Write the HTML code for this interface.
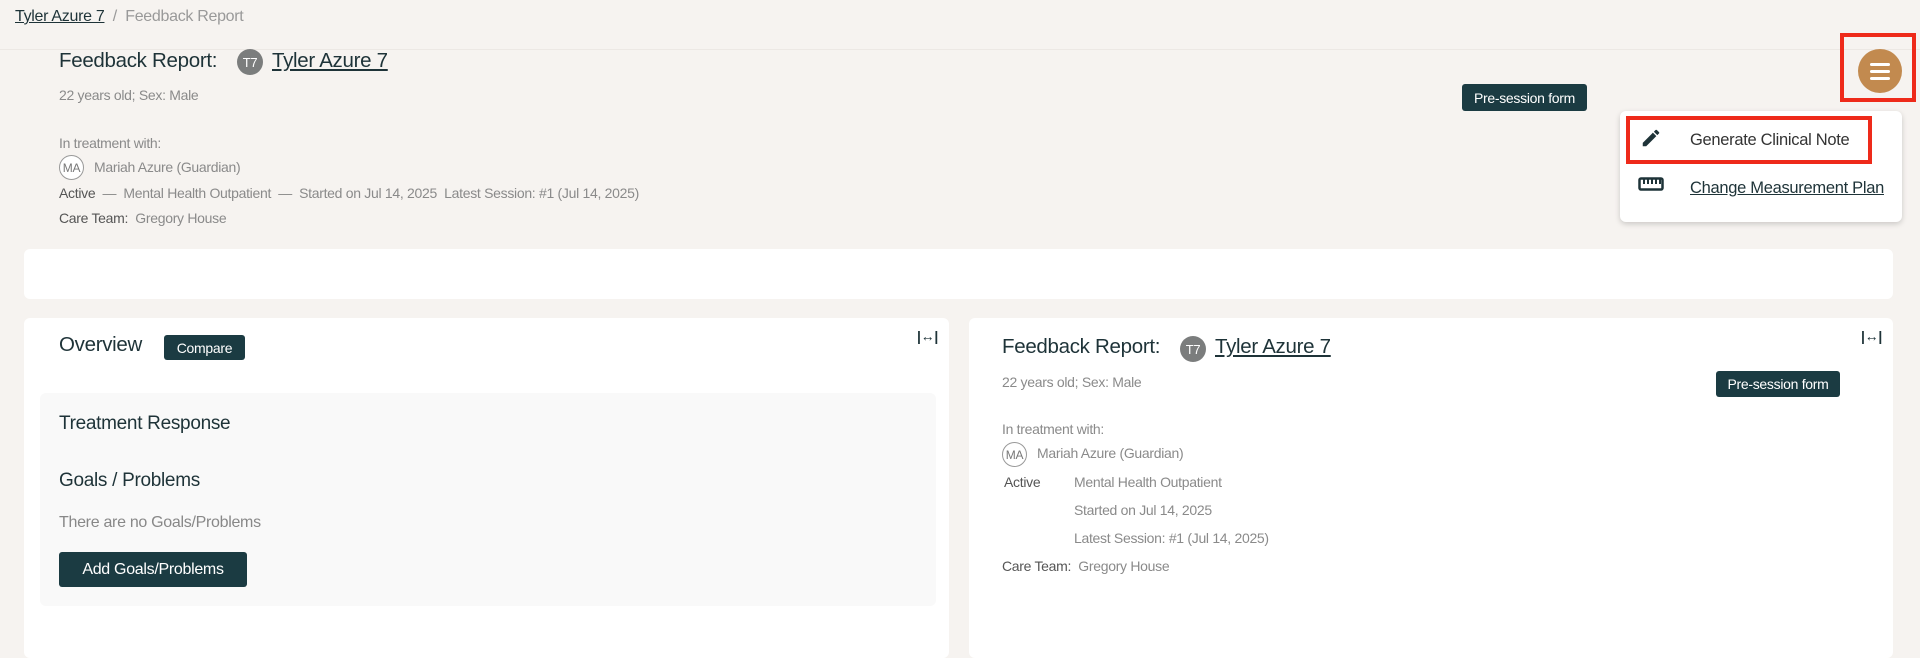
<!DOCTYPE html>
<html><head><meta charset="utf-8"><style>
*{box-sizing:border-box;margin:0;padding:0}
body{width:1920px;height:648px;overflow:hidden;background:#f6f3f0;font-family:"Liberation Sans",sans-serif;color:#1e3338;position:relative;letter-spacing:-0.3px}
.a{position:absolute;white-space:nowrap}
.g{color:#8a8a8a;font-size:14px}
.d{color:#555;font-size:14px}
.btn{position:absolute;background:#1b3b42;color:#fff;border-radius:3px;font-size:14px;display:flex;align-items:center;justify-content:center}
.av{position:absolute;width:26px;height:26px;border-radius:50%;background:#7b7d7d;color:#fff;font-size:13px;display:flex;align-items:center;justify-content:center}
.ma{position:absolute;width:25px;height:25px;border-radius:50%;border:1px solid #999;color:#777;font-size:12px;display:flex;align-items:center;justify-content:center;background:#fff}
.lnk{text-decoration:underline;color:#1e3338}
.panel{position:absolute;background:#fff;border-radius:6px}
</style></head><body>
<div class="a" style="left:15px;top:8px;font-size:16px"><span class="lnk">Tyler Azure 7</span> <span style="color:#999">&nbsp;/&nbsp; Feedback Report</span></div>
<div class="a" style="left:0;top:49px;width:1920px;height:1px;background:#ece8e4"></div>

<div class="a" style="left:59px;top:49px;font-size:20.5px">Feedback Report:</div>
<div class="av" style="left:237px;top:49px">T7</div>
<div class="a lnk" style="left:272px;top:49px;font-size:20.5px">Tyler Azure 7</div>
<div class="a g" style="left:59px;top:87px">22 years old; Sex: Male</div>
<div class="btn" style="left:1462px;top:84px;width:125px;height:27px">Pre-session form</div>
<div class="a g" style="left:59px;top:135px">In treatment with:</div>
<div class="ma" style="left:59px;top:155px">MA</div>
<div class="a g" style="left:94px;top:159px">Mariah Azure (Guardian)</div>
<div class="a g" style="left:59px;top:185px"><b style="color:#555;font-weight:normal">Active</b> &nbsp;— &nbsp;Mental Health Outpatient &nbsp;— &nbsp;Started on Jul 14, 2025 &nbsp;Latest Session: #1 (Jul 14, 2025)</div>
<div class="a g" style="left:59px;top:210px"><span style="color:#555">Care Team:</span> &nbsp;Gregory House</div>

<div class="a" style="left:1840px;top:33px;width:76px;height:69px;border:4px solid #ee2a1a"></div>
<div class="a" style="left:1858px;top:49px;width:44px;height:44px;border-radius:50%;background:#c28a4f"></div>
<div class="a" style="left:1870px;top:63px;width:20px;height:3px;background:#fff;border-radius:2px"></div>
<div class="a" style="left:1870px;top:70px;width:20px;height:3px;background:#fff;border-radius:2px"></div>
<div class="a" style="left:1870px;top:77px;width:20px;height:3px;background:#fff;border-radius:2px"></div>

<div class="a" style="left:1620px;top:111px;width:282px;height:111px;background:#fff;border-radius:6px;box-shadow:0 2px 6px rgba(0,0,0,.18)"></div>
<div class="a" style="left:1626px;top:116px;width:246px;height:48px;border:4px solid #ee2a1a"></div>
<svg class="a" style="left:1640px;top:127px" width="22" height="22" viewBox="0 0 24 24"><path d="M3 17.25V21h3.75L17.81 9.94l-3.75-3.75L3 17.25zM20.71 7.04a1 1 0 000-1.41l-2.34-2.34a1 1 0 00-1.41 0l-1.83 1.83 3.75 3.75 1.83-1.83z" fill="#1e3338"/></svg>
<div class="a" style="left:1690px;top:131px;font-size:16.5px;color:#333">Generate Clinical Note</div>
<svg class="a" style="left:1638px;top:177px" width="26" height="14" viewBox="0 0 26 14"><rect x="1.5" y="1.5" width="23" height="11" rx="1.5" fill="none" stroke="#1e3338" stroke-width="2.5"/><path d="M6 2v5M10 2v5M14 2v5M18 2v5M22 2v5" stroke="#1e3338" stroke-width="2"/></svg>
<div class="a lnk" style="left:1690px;top:179px;font-size:16.5px">Change Measurement Plan</div>

<div class="panel" style="left:24px;top:249px;width:1869px;height:50px"></div>

<div class="panel" style="left:24px;top:318px;width:925px;height:340px"></div>
<div class="a" style="left:59px;top:333px;font-size:20.5px">Overview</div>
<div class="btn" style="left:164px;top:335px;width:81px;height:25px;font-size:14px">Compare</div>
<div class="a" style="left:917px;top:328px;font-size:14px;font-weight:bold;color:#1e3338">|↔|</div>
<div class="a" style="left:40px;top:393px;width:896px;height:213px;background:#f9f9f9;border-radius:6px"></div>
<div class="a" style="left:59px;top:413px;font-size:19px">Treatment Response</div>
<div class="a" style="left:59px;top:470px;font-size:19px">Goals / Problems</div>
<div class="a" style="left:59px;top:514px;font-size:16px;color:#888">There are no Goals/Problems</div>
<div class="btn" style="left:59px;top:552px;width:188px;height:35px;font-size:16px">Add Goals/Problems</div>

<div class="panel" style="left:969px;top:318px;width:924px;height:340px"></div>
<div class="a" style="left:1002px;top:335px;font-size:20.5px">Feedback Report:</div>
<div class="av" style="left:1180px;top:336px">T7</div>
<div class="a lnk" style="left:1215px;top:335px;font-size:20.5px">Tyler Azure 7</div>
<div class="a" style="left:1861px;top:328px;font-size:14px;font-weight:bold">|↔|</div>
<div class="a g" style="left:1002px;top:374px">22 years old; Sex: Male</div>
<div class="btn" style="left:1716px;top:371px;width:124px;height:26px">Pre-session form</div>
<div class="a g" style="left:1002px;top:421px">In treatment with:</div>
<div class="ma" style="left:1002px;top:442px">MA</div>
<div class="a g" style="left:1037px;top:445px">Mariah Azure (Guardian)</div>
<div class="a d" style="left:1004px;top:474px">Active</div>
<div class="a g" style="left:1074px;top:474px">Mental Health Outpatient</div>
<div class="a g" style="left:1074px;top:502px">Started on Jul 14, 2025</div>
<div class="a g" style="left:1074px;top:530px">Latest Session: #1 (Jul 14, 2025)</div>
<div class="a g" style="left:1002px;top:558px"><span style="color:#555">Care Team:</span> &nbsp;Gregory House</div>
</body></html>
